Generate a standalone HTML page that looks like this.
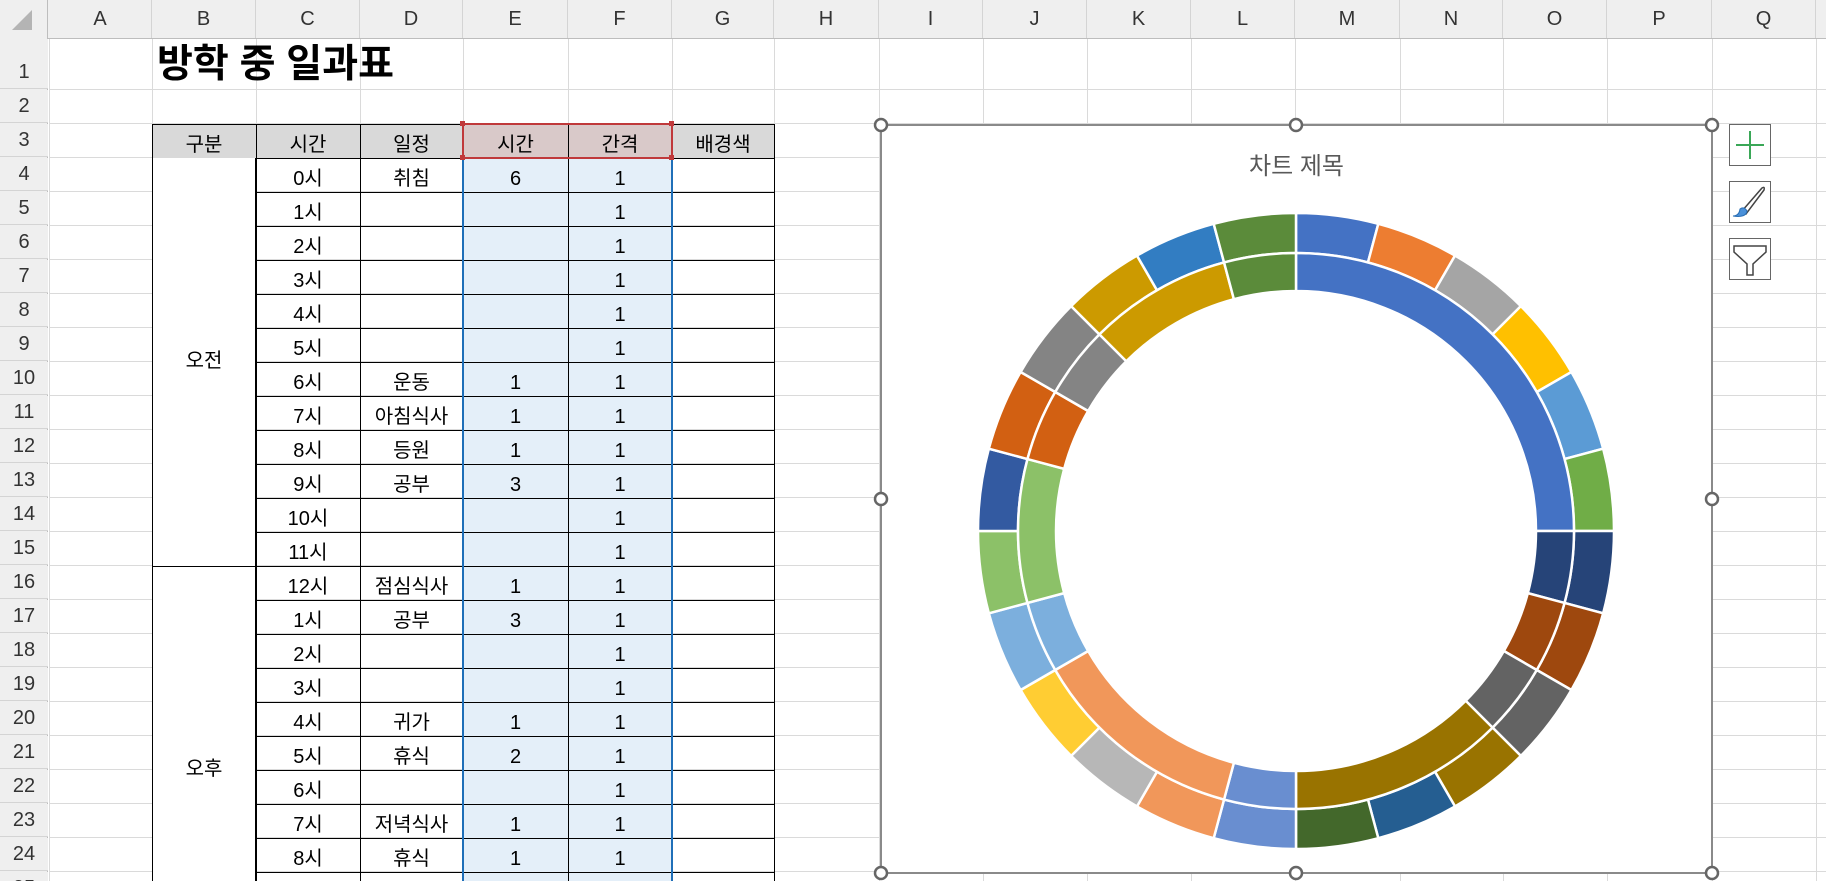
<!DOCTYPE html>
<html style="width:1826px;height:881px;overflow:hidden"><head><meta charset="utf-8">
<style>
*{margin:0;padding:0;box-sizing:border-box}
body{width:1826px;height:881px;overflow:hidden;background:#fff;position:relative;font-family:"Liberation Sans","Noto Sans CJK KR",sans-serif;}
.a{position:absolute}
.t{position:absolute;display:flex;align-items:flex-end;justify-content:center;padding-bottom:3px;font-size:20px;color:#000;line-height:1}
.h{position:absolute;display:flex;align-items:center;justify-content:center;font-size:20px;color:#333;background:#efefef}
#g{position:absolute;left:0;top:0;width:1826px;height:881px;overflow:hidden}
</style></head><body>
<div id="g"></div>
<svg class="a" style="left:0;top:0" width="1826" height="881" id="s"></svg>
<script>
var X=[49,152,256,360,463,568,672,774,879,983,1087,1191,1295,1400,1503,1607,1712,1816,1920];
var L="ABCDEFGHIJKLMNOPQ";
function R(n){return n==1?39:90+34*(n-2);}
var h='';
for(var i=0;i<X.length;i++)h+='<div class="a" style="left:'+X[i]+'px;top:39px;width:1px;height:842px;background:#dadada"></div>';
for(var r=1;r<=25;r++)h+='<div class="a" style="left:49px;top:'+(R(r+1)-1)+'px;width:1777px;height:1px;background:#dadada"></div>';
h+='<div class="a" style="left:0;top:0;width:1826px;height:39px;background:#efefef;border-bottom:1px solid #bdbdbd"></div>';
h+='<div class="a" style="left:0;top:0;width:48px;height:881px;background:#efefef;border-right:1px solid #bdbdbd"></div>';
h+='<div class="a" style="left:12px;top:10px;width:0;height:0;border-left:20px solid transparent;border-bottom:20px solid #b4b4b4"></div>';
for(var i=0;i<17;i++){h+='<div class="h" style="left:'+X[i]+'px;top:0;width:'+(X[i+1]-X[i])+'px;height:38px;border-right:1px solid #d4d4d4">'+L[i]+'</div>';}
for(var r=1;r<=25;r++){var t=R(r),b=R(r+1);h+='<div class="h" style="left:0;top:'+t+'px;width:48px;height:'+(b-t-1)+'px;border-bottom:1px solid #d4d4d4;align-items:flex-end;padding-bottom:4px">'+r+'</div>';}
h+='<div class="a" style="left:157px;top:40px;font-size:39px;font-weight:bold;line-height:50px">방학 중 일과표</div>';
h+='<div class="a" style="left:152px;top:124px;width:622px;height:34px;background:#d9d9d9"></div>';
h+='<div class="a" style="left:463px;top:124px;width:209px;height:34px;background:#d9c9c9"></div>';
h+='<div class="a" style="left:463px;top:158px;width:209px;height:723px;background:#e4eff9"></div>';
h+='<div class="a" style="left:152px;top:158px;width:104px;height:723px;background:#fff"></div>';
for(var c=1;c<=7;c++)h+='<div class="a" style="left:'+X[c]+'px;top:124px;width:1px;height:757px;background:#000"></div>';
h+='<div class="a" style="left:152px;top:124px;width:622px;height:1px;background:#000"></div>';
h+='<div class="a" style="left:152px;top:158px;width:622px;height:1px;background:#000"></div>';
for(var r=5;r<=26;r++){var x0=(r==16)?152:256;h+='<div class="a" style="left:'+x0+'px;top:'+R(r)+'px;width:'+(774-x0)+'px;height:1px;background:#000"></div>';}
h+='<div class="a" style="left:152px;top:158px;width:104px;height:723px;background:#fff;border-left:1px solid #000;border-right:1px solid #000"></div>';
h+='<div class="a" style="left:152px;top:566px;width:104px;height:1px;background:#000"></div>';
function cell(c,r,txt){h+='<div class="t" style="left:'+X[c]+'px;top:'+R(r)+'px;width:'+(X[c+1]-X[c])+'px;height:34px">'+txt+'</div>';}
var hd=['구분','시간','일정','시간','간격','배경색'];for(var i=0;i<6;i++)cell(i+1,3,hd[i]);
var hrs=['0시','1시','2시','3시','4시','5시','6시','7시','8시','9시','10시','11시','12시','1시','2시','3시','4시','5시','6시','7시','8시','9시'];
var ev={0:'취침',6:'운동',7:'아침식사',8:'등원',9:'공부',12:'점심식사',13:'공부',16:'귀가',17:'휴식',19:'저녁식사',20:'휴식',21:'보드게임'};
var ve={0:6,6:1,7:1,8:1,9:3,12:1,13:3,16:1,17:2,19:1,20:1,21:2};
for(var i=0;i<22;i++){cell(2,4+i,hrs[i]);if(ev[i])cell(3,4+i,ev[i]);if(ve[i])cell(4,4+i,ve[i]);cell(5,4+i,'1');}
h+='<div class="t" style="left:152px;top:340px;width:104px;height:34px">오전</div>';
h+='<div class="t" style="left:152px;top:748px;width:104px;height:34px">오후</div>';
h+='<div class="a" style="left:462px;top:158px;width:2px;height:723px;background:#1f6fb8"></div>';
h+='<div class="a" style="left:671px;top:158px;width:2px;height:723px;background:#1f6fb8"></div>';
h+='<div class="a" style="left:462px;top:123px;width:211px;height:36px;border:2px solid #c0393b"></div>';
[[460,121],[669,121],[460,155],[669,155]].forEach(function(p){h+='<div class="a" style="left:'+p[0]+'px;top:'+p[1]+'px;width:5px;height:5px;background:#c0393b"></div>';});
h+='<div class="a" style="left:880px;top:124px;width:833px;height:750px;background:#fff;border:2px solid #8a8a8a"></div>';
h+='<div class="a" style="left:880px;top:146px;width:833px;text-align:center;font-size:24px;color:#595959">차트 제목</div>';
[124,181,238].forEach(function(y){h+='<div class="a" style="left:1729px;top:'+y+'px;width:42px;height:42px;border:1px solid #666;background:#fff"></div>';});
document.getElementById('g').innerHTML=h;
var cx=1296,cy=531;
function arc(a0,a1,r0,r1,col){function p(a,r){var t=(a-90)*Math.PI/180;return (cx+r*Math.cos(t)).toFixed(2)+' '+(cy+r*Math.sin(t)).toFixed(2);}
var lg=(a1-a0)>180?1:0;return '<path d="M'+p(a0,r1)+' A'+r1+' '+r1+' 0 '+lg+' 1 '+p(a1,r1)+' L'+p(a1,r0)+' A'+r0+' '+r0+' 0 '+lg+' 0 '+p(a0,r0)+'Z" fill="'+col+'" stroke="#fff" stroke-width="2.5"/>';}
var C=['#4472C4','#ED7D31','#A5A5A5','#FFC000','#5B9BD5','#70AD47','#264478','#9E480E','#636363','#997300','#255E91','#43682B','#698ED0','#F1975A','#B7B7B7','#FFCD33','#7CAFDD','#8CC168','#335AA1','#D26012','#848484','#CC9A00','#327DC2','#5B8B3A'];
var s='';
for(var i=0;i<24;i++)s+=arc(i*15,i*15+15,278,318,C[i]);
var inner=[[0,6],[6,1],[7,1],[8,1],[9,3],[12,1],[13,3],[16,1],[17,2],[19,1],[20,1],[21,2],[23,1]];
var a=0;inner.forEach(function(v){s+=arc(a,a+v[1]*15,240,278,C[v[0]]);a+=v[1]*15;});
[[881,125],[1296,125],[1712,125],[881,499],[1712,499],[881,873],[1296,873],[1712,873]].forEach(function(p){s+='<circle cx="'+p[0]+'" cy="'+p[1]+'" r="6" fill="#fff" stroke="#666" stroke-width="2.5"/>';});
s+='<path d="M1750 131V159M1736 145H1764" stroke="#3aa757" stroke-width="2"/>';
s+='<path d="M1742 211L1762 188Q1765 186 1764 190L1746 214Z" fill="#fff" stroke="#444" stroke-width="1.5"/><path d="M1733 216Q1739 216 1740 209Q1744 206 1747 211Q1746 218 1733 216Z" fill="#4a90d9" stroke="#2a6fb5" stroke-width="1"/>';
s+='<path d="M1734 246H1766V252L1753 264V275H1747V264L1734 252Z" fill="#fff" stroke="#444" stroke-width="1.5"/>';
document.getElementById('s').innerHTML=s;
</script>
</body></html>
